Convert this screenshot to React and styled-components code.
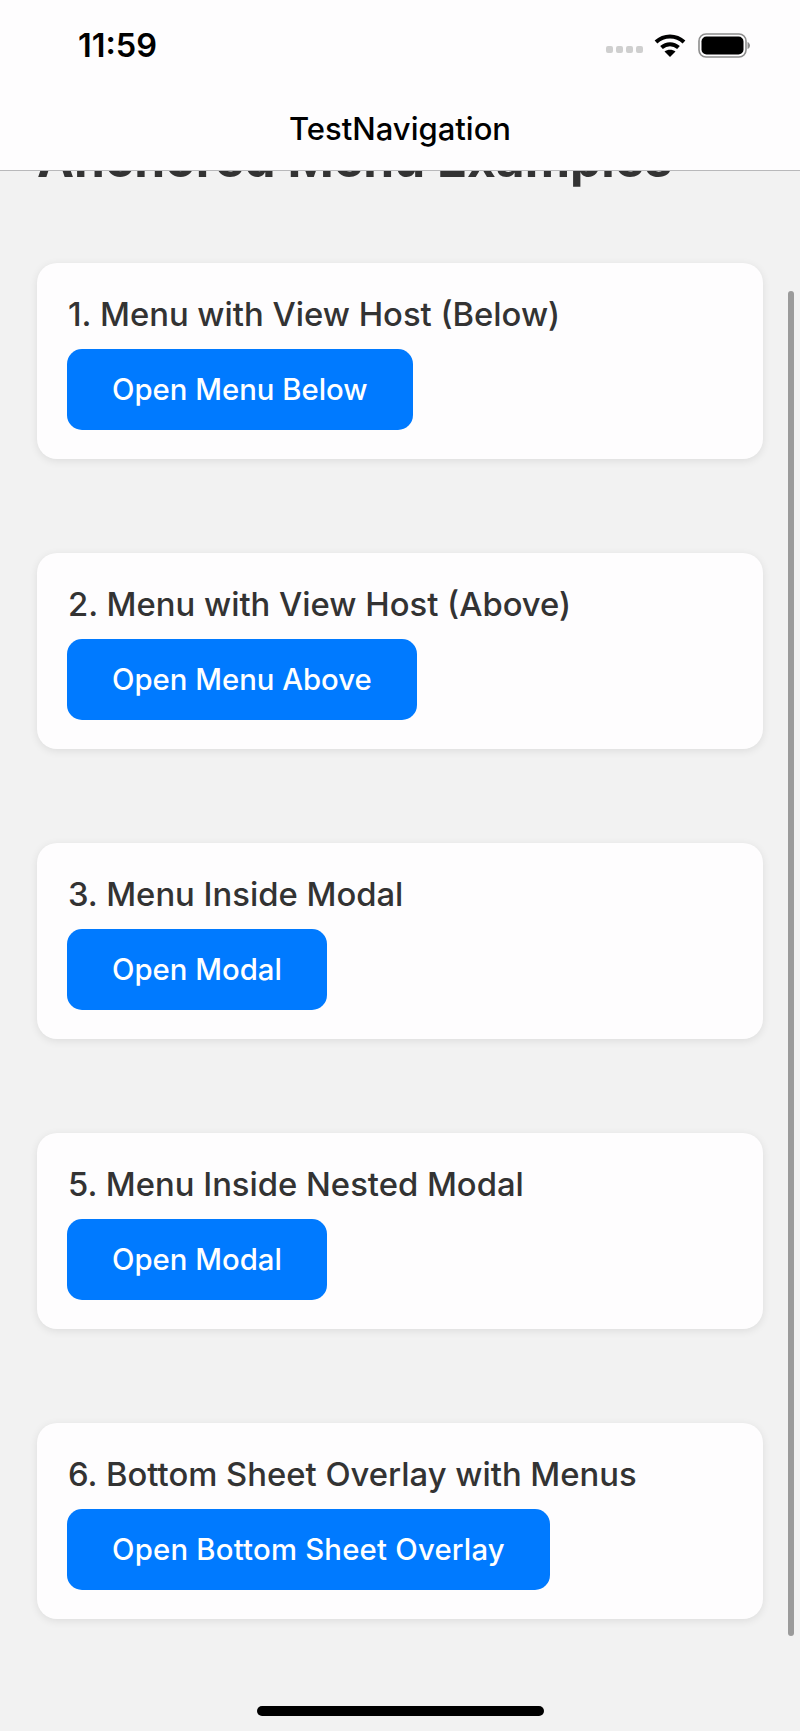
import React from "react";
import styled, { createGlobalStyle } from "styled-components";

const Global = createGlobalStyle`
  html, body { margin: 0; padding: 0; background: #f2f2f2; }
  * { box-sizing: border-box; }
`;

const Screen = styled.div`
  position: relative;
  width: 800px;
  height: 1731px;
  overflow: hidden;
  background: #f2f2f2;
  font-family: Inter, "Liberation Sans", sans-serif;
`;

const TopBar = styled.header`
  position: absolute;
  top: 0;
  left: 0;
  right: 0;
  height: 171px;
  background: #fefdfe;
  border-bottom: 1px solid #b9b9bb;
  z-index: 2;
`;

const StatusRow = styled.div`
  height: 90px;
  display: flex;
  align-items: center;
  justify-content: space-between;
  padding: 0 50px 0 78px;
`;

const Clock = styled.span`
  font-size: 32.5px;
  font-weight: 600;
  color: #000;
`;

const StatusIcons = styled.div`
  display: flex;
  align-items: center;
`;

const Dots = styled.div`
  display: flex;
  gap: 3px;
  margin: 9px 11px 0 0;
`;

const Dot = styled.i`
  width: 7px;
  height: 7px;
  border-radius: 2px;
  background: #cfcfcf;
`;

const WifiSlot = styled.div`
  display: flex;
  margin-right: 12px;
`;

const NavTitle = styled.div`
  height: 80px;
  display: flex;
  justify-content: center;
  padding-top: 21px;
  font-size: 31px;
  line-height: 36px;
  font-weight: 500;
  color: #000;
`;

const Scroller = styled.main`
  padding: 128px 37px 0;
`;

const Heading = styled.h1`
  margin: 0 0 73px;
  font-size: 49.7px;
  line-height: 62px;
  font-weight: 700;
  white-space: nowrap;
  color: #333;
`;

const CardList = styled.div`
  display: flex;
  flex-direction: column;
  gap: 94px;
`;

const Card = styled.section`
  padding: 32px 30px 29px;
  background: #fefdfe;
  border-radius: 20px;
  box-shadow: 0 2px 9px rgba(0, 0, 0, 0.09);
`;

const CardTitle = styled.h2`
  margin: 0 0 15px 1px;
  font-size: 32.8px;
  line-height: 39px;
  font-weight: 550;
  color: #333;
`;

const Button = styled.button`
  display: block;
  height: 81px;
  padding: 0 45px;
  border: 0;
  border-radius: 15px;
  background: #007aff;
  color: #fff;
  font-family: inherit;
  font-size: 29.3px;
  font-weight: 500;
  letter-spacing: ${(p) => p.$spread || 0}px;
`;

const ScrollThumb = styled.div`
  position: absolute;
  left: 788px;
  top: 291px;
  width: 6px;
  height: 1345px;
  border-radius: 3px;
  background: #9b9b9b;
`;

const HomeIndicator = styled.div`
  position: absolute;
  left: 257px;
  top: 1706px;
  width: 287px;
  height: 10px;
  border-radius: 5px;
  background: #000;
`;

const cards = [
  { title: "1. Menu with View Host (Below)", label: "Open Menu Below" },
  { title: "2. Menu with View Host (Above)", label: "Open Menu Above" },
  { title: "3. Menu Inside Modal", label: "Open Modal" },
  { title: "5. Menu Inside Nested Modal", label: "Open Modal" },
  { title: "6. Bottom Sheet Overlay with Menus", label: "Open Bottom Sheet Overlay", spread: 0.22 },
];

const Wifi = () => (
  <svg width="32" height="24" viewBox="0 0 32 24" fill="none" stroke="#000" strokeWidth="4">
    <path d="M2 9 C10 1.5 22 1.5 30 9" />
    <path d="M7.5 14.5 C12.5 10 19.500 10 24.5 14.5" />
    <path d="M16 24 L10.5 18.5 C13.5 16 18.5 16 21.5 18.5 Z" fill="#000" stroke="none" />
  </svg>
);

const Battery = () => (
  <svg width="52" height="25" viewBox="0 0 52 25">
    <rect x="1" y="1" width="47" height="23" rx="7" fill="none" stroke="#8c8c8c" strokeWidth="1.6" />
    <rect x="3.500" y="3.500" width="42" height="18" rx="5" fill="#000" />
    <path d="M49.500 9 C51 9.500 52 11 52 12.500 C52 14 51 15.500 49.500 16 Z" fill="#8c8c8c" />
  </svg>
);

export default function App() {
  return (
    <Screen>
      <Global />
      <TopBar>
        <StatusRow>
          <Clock>11:59</Clock>
          <StatusIcons>
            <Dots>
              <Dot /><Dot /><Dot /><Dot />
            </Dots>
            <WifiSlot>
              <Wifi />
            </WifiSlot>
            <Battery />
          </StatusIcons>
        </StatusRow>
        <NavTitle>TestNavigation</NavTitle>
      </TopBar>
      <Scroller>
        <Heading>Anchored Menu Examples</Heading>
        <CardList>
          {cards.map((card) => (
            <Card key={card.title}>
              <CardTitle>{card.title}</CardTitle>
              <Button $spread={card.spread}>{card.label}</Button>
            </Card>
          ))}
        </CardList>
      </Scroller>
      <ScrollThumb />
      <HomeIndicator />
    </Screen>
  );
}
